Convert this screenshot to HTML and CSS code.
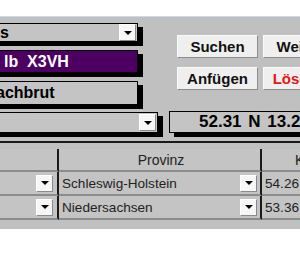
FILE: index.html
```html
<!DOCTYPE html>
<html lang="de">
<head>
    <meta charset="UTF-8">
    <title>Fundorte</title>
    <link rel="stylesheet" href="styles.css">
</head>
<body>

<div class="topbar"></div>

<div class="panel">
    <!-- Kopfbereich: Felder links, Knoepfe rechts -->
    <div class="top">
        <div class="fields">
            <div class="field combo f1">
                <span class="value">s</span>
                <span class="drop"><i></i></span>
            </div>
            <div class="field purple">
                <span class="value">lb&nbsp; X3VH</span>
            </div>
            <div class="field f3">
                <span class="value">achbrut</span>
            </div>
        </div>
        <div class="buttons">
            <button class="btn">Suchen</button>
            <button class="btn">Weitere</button>
            <button class="btn">Anfügen</button>
            <button class="btn red">Löschen</button>
        </div>
    </div>

    <div class="row2">
        <div class="field combo f4">
            <span class="value"></span>
            <span class="drop"><i></i></span>
        </div>
        <div class="field coord">52.31 N 13.2</div>
    </div>

    <!-- Tabelle der Fundorte -->
    <div class="grid">
        <div class="gcell head c1"></div>
        <div class="gcell head c2">Provinz</div>
        <div class="gcell head c3">K</div>

        <div class="gcell c1"><span class="drop"><i></i></span></div>
        <div class="gcell c2"><span class="txt">Schleswig-Holstein</span><span class="drop"><i></i></span></div>
        <div class="gcell c3">54.26</div>

        <div class="gcell c1"><span class="drop"><i></i></span></div>
        <div class="gcell c2"><span class="txt">Niedersachsen</span><span class="drop"><i></i></span></div>
        <div class="gcell c3">53.36</div>
    </div>
</div>

</body>
</html>
```

FILE: styles.css
```css
* {
    box-sizing: border-box;
}

body {
    margin: 0;
    background-color: #fff;
    font-family: "Liberation Sans", Arial, sans-serif;
    overflow: hidden;
}

.topbar {
    height: 16px;
}

.panel {
    background-color: #c0c0c0;
    border-top: 1px solid #cbd9e8;
    height: 213px;
    overflow: hidden;
}

/* Kopfbereich */
.top {
    display: flex;
    align-items: flex-start;
}

.fields {
    margin-left: -62px;
    width: 200px;
    flex-shrink: 0;
    padding-top: 6px;
    display: flex;
    flex-direction: column;
}

.field {
    border: 1px solid #000;
    box-shadow: 5px 4px 0 #000;
    background-color: #c4c4c4;
    font-weight: bold;
    font-size: 16px;
    display: flex;
    align-items: center;
    white-space: nowrap;
    overflow: hidden;
}

.field .value {
    flex: 1;
    padding-left: 61px;
    overflow: hidden;
}

.f1 {
    height: 19px;
}

.purple {
    margin-top: 8px;
    height: 23px;
    background-color: #4d0062;
    color: #fff;
}

.purple .value {
    padding-left: 65px;
}

.f3 {
    margin-top: 8px;
    height: 24px;
}

.f3 .value {
    padding-left: 57px;
}

.drop {
    width: 17px;
    height: 17px;
    margin-right: 1px;
    background-color: #f6f6f6;
    border: 1px solid;
    border-color: #fff #8a8a8a #8a8a8a #fff;
    display: flex;
    justify-content: center;
    align-items: center;
    flex-shrink: 0;
}

.drop i {
    width: 0;
    height: 0;
    border-left: 4px solid transparent;
    border-right: 4px solid transparent;
    border-top: 4px solid #000;
}

/* Knoepfe */
.buttons {
    margin-left: 39px;
    padding-top: 18px;
    display: grid;
    grid-template-columns: 81px 81px;
    gap: 9px 5px;
}

.btn {
    height: 23px;
    padding: 0;
    background-color: #efefef;
    border: 1px solid;
    border-color: #fafafa #8c8c8c #8c8c8c #fafafa;
    font-family: inherit;
    font-size: 15px;
    font-weight: bold;
    color: #111;
    white-space: nowrap;
}

.btn.red {
    color: #e01818;
}

/* Zweite Zeile */
.row2 {
    display: flex;
    align-items: flex-start;
    margin-top: 7px;
}

.f4 {
    margin-left: -62px;
    width: 220px;
    height: 21px;
    flex-shrink: 0;
}

.coord {
    margin-left: 11px;
    margin-top: -1px;
    height: 22px;
    flex: 1;
    min-width: 200px;
    padding-left: 29px;
    font-size: 17px;
    word-spacing: 2px;
}

/* Tabelle */
.grid {
    margin-top: 8px;
    margin-left: -62px;
    border-top: 2px solid #1a1a1a;
    padding-top: 6px;
    display: grid;
    grid-template-columns: 121px 203px 142px;
    font-size: 13.6px;
    color: #222;
}

.gcell {
    height: 24px;
    border-bottom: 2px solid #8c8c8c;
    border-right: 2px solid #1a1a1a;
    display: flex;
    align-items: center;
    padding-left: 3px;
    background-color: #c4c4c4;
    white-space: nowrap;
    overflow: hidden;
}

.gcell.head {
    height: 23px;
    justify-content: center;
    font-size: 14px;
}

.gcell.head.c3 {
    justify-content: flex-start;
    padding-left: 33px;
}

.gcell .txt {
    flex: 1;
}

.c1 {
    justify-content: flex-end;
    padding-right: 3px;
}

.c2 .drop {
    margin-right: 3px;
}
```
